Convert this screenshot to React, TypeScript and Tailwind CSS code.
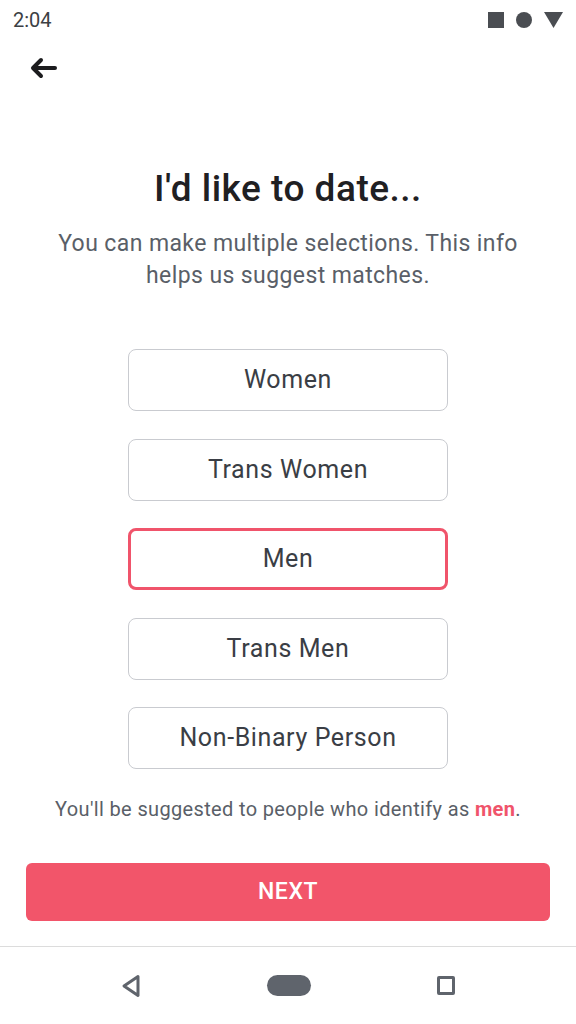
import React from 'react';

const options = ['Women', 'Trans Women', 'Men', 'Trans Men', 'Non-Binary Person'];

const App: React.FC = () => {
  const selected = 'Men';

  return (
    <div className="w-[576px] h-[1024px] bg-white flex flex-col font-['Roboto',sans-serif] overflow-hidden">
      {/* status bar */}
      <div className="h-[40px] flex items-center justify-between pl-[13px] pr-[13px]">
        <span className="text-[20px] text-[#3c3f44] leading-none">2:04</span>
        <div className="flex items-center gap-[12px]">
          <div className="w-[16px] h-[16px] bg-[#4a4d52]" />
          <div className="w-[16px] h-[16px] rounded-full bg-[#4a4d52]" />
          <svg width="19" height="16" viewBox="0 0 19 16">
            <polygon points="0,0 19,0 9.5,16" fill="#4a4d52" />
          </svg>
        </div>
      </div>

      {/* back */}
      <div className="h-[56px] flex items-center pl-[30px]">
        <svg width="28" height="22" viewBox="0 0 28 22" fill="none" stroke="#1c1c1e" strokeWidth="4" strokeLinecap="round" strokeLinejoin="round">
          <path d="M25 11H4" />
          <path d="M11 3L3 11l8 8" />
        </svg>
      </div>

      <div className="flex-1 flex flex-col items-center">
        <h1 className="mt-[71px] text-[37px] leading-[44px] font-medium tracking-[0.5px] text-[#1f2023]">I'd like to date...</h1>
        <p className="mt-[17px] w-[500px] text-center text-[23px] leading-[32px] tracking-[0.4px] text-[#5a5f68]">
          You can make multiple selections. This info helps us suggest matches.
        </p>

        <div className="mt-[57px] flex flex-col gap-[27.5px]">
          {options.map((o) => (
            <button
              key={o}
              className={
                o === selected
                  ? 'w-[320px] h-[62px] rounded-[8px] border-[3px] border-[#f0546b] bg-white text-[25px] tracking-[0.6px] text-[#3a3e45]'
                  : 'w-[320px] h-[62px] rounded-[8px] border border-[#c9cbd0] bg-white text-[25px] tracking-[0.6px] text-[#3a3e45]'
              }
            >
              {o}
            </button>
          ))}
        </div>

        <p className="mt-[27px] text-[20px] leading-[26px] tracking-[0.35px] text-[#5a5f68]">
          You'll be suggested to people who identify as <span className="font-bold text-[#f0546b]">men</span>.
        </p>

        <button className="mt-[41px] w-[524px] h-[58px] rounded-[6px] bg-[#f2556a] text-white text-[23px] font-medium tracking-[0.6px]">
          NEXT
        </button>
      </div>

      {/* nav bar */}
      <div className="h-[78px] border-t border-[#dcdcdc] flex items-center justify-center">
        <div className="w-[334px] flex items-center justify-between">
          <svg width="20" height="24" viewBox="0 0 20 24" fill="none" stroke="#5f646c" strokeWidth="3" strokeLinejoin="round">
            <path d="M17 2.5L3 12l14 9.5z" />
          </svg>
          <div className="w-[44px] h-[21px] rounded-full bg-[#5f646c]" />
          <div className="w-[18px] h-[19px] rounded-[2px] border-[3px] border-[#5f646c]" />
        </div>
      </div>
    </div>
  );
};

export default App;
